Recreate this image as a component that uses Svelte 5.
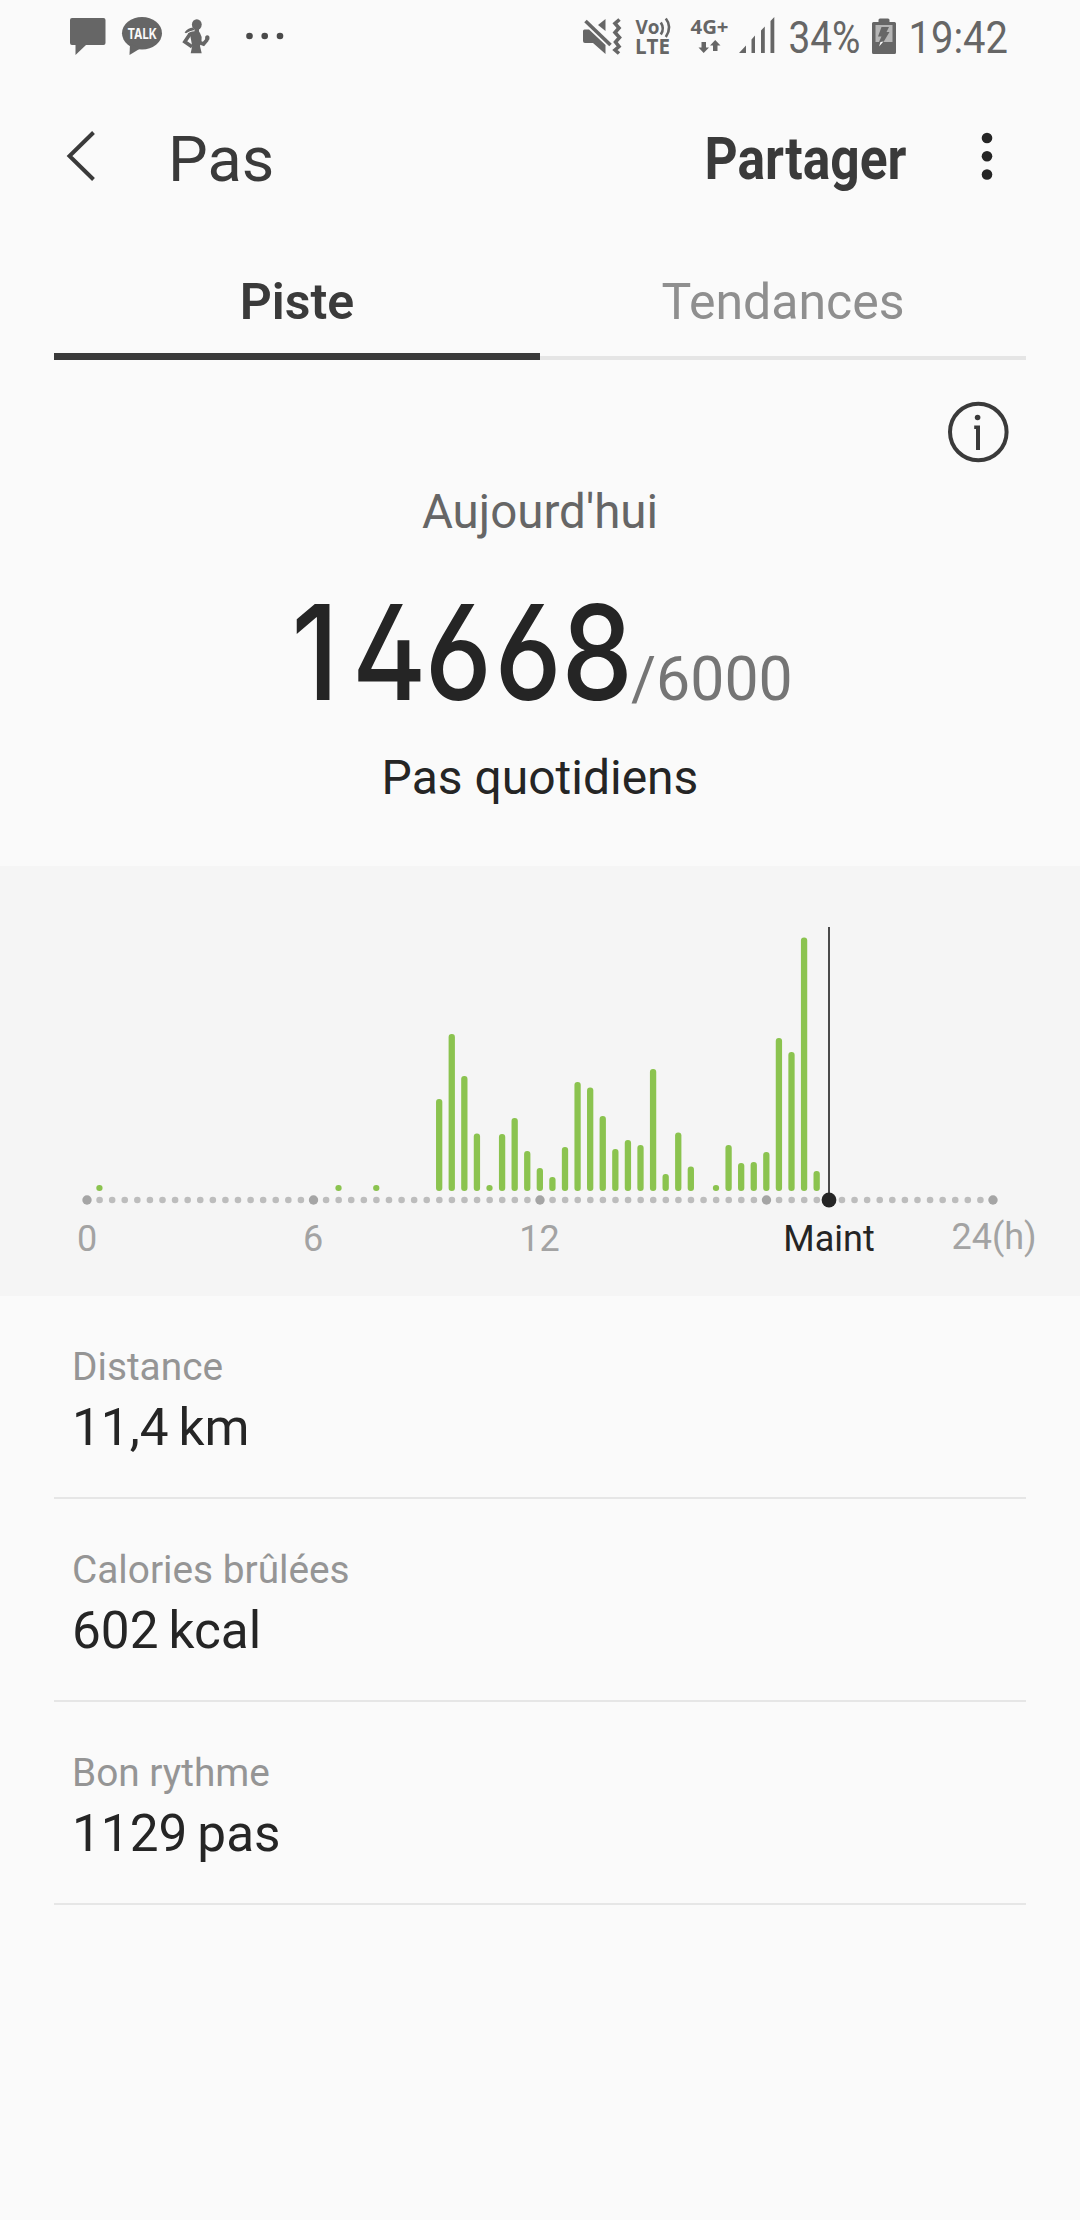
<script lang="ts">
  // Twenty-minute slots of the day, 0 to 72; each value is a bar height in px.
  const bars: [number, number][] = [
    [1, 6], [20, 6], [23, 6],
    [28, 92], [29, 157], [30, 115], [31, 57.5], [32, 6], [33, 57], [34, 73],
    [35, 40], [36, 23], [37, 14], [38, 44], [39, 109], [40, 103.5], [41, 75],
    [42, 42], [43, 51], [44, 46], [45, 122], [46, 17], [47, 58.5], [48, 24.5],
    [50, 6], [51, 46], [52, 28], [53, 29], [54, 39], [55, 153], [56, 139],
    [57, 253.5], [58, 20],
  ];
  const slots = Array.from({ length: 73 }, (_, i) => i);
  const now = 59;
  const slotX = (i: number) => 87 + i * 12.583;

  const stats = [
    { label: 'Distance', value: '11,4', unit: 'km' },
    { label: 'Calories brûlées', value: '602', unit: 'kcal' },
    { label: 'Bon rythme', value: '1129', unit: 'pas' },
  ];
</script>

<div class="screen">
  <div class="status">
    <svg class="lead" width="48" height="75" viewBox="66 0 48 75">
      <path d="M72 18H103.500Q105.500 18 105.500 20V43Q105.500 45 103.500 45H86L75.500 55V45H72Q70 45 70 43V20Q70 18 72 18Z" />
    </svg>
    <svg width="60" height="75" viewBox="114 0 60 75">
      <ellipse cx="142" cy="33.300" rx="20" ry="16.300" />
      <path d="M130 44L129.500 55L141 48Z" />
      <text class="talk" x="127.500" y="38.800" textLength="29.500" lengthAdjust="spacingAndGlyphs">TALK</text>
    </svg>
    <svg width="60" height="75" viewBox="174 0 60 75">
      <ellipse cx="196.800" cy="24.600" rx="4.900" ry="5.400" />
      <path d="M193 27.500Q187.500 28 184.600 32.500L186 33.300Q189.500 30.800 194.500 30Z" />
      <path d="M194.500 28H199V31.500L200 33Q202.500 37 201.500 41L200 46L201.700 53.300H190.700L192.200 46L190.300 36L188 33.500Q189.500 31.800 194.500 31.200Z" />
      <path class="line w3" d="M190 34L184.800 41.700L192 46.700" />
      <path class="line w3" d="M199.500 42.500L203.500 44L207.300 39.500" />
      <ellipse cx="207.300" cy="38" rx="2.200" ry="2.700" />
    </svg>
    <svg width="60" height="75" viewBox="234 0 60 75">
      <g class="dark">
        <circle cx="249.500" cy="36" r="3.300" />
        <circle cx="264.700" cy="36" r="3.300" />
        <circle cx="280" cy="36" r="3.300" />
      </g>
    </svg>
    <svg class="right" width="48" height="75" viewBox="580 0 48 75">
      <path d="M583 31Q583 29.500 584.500 29.500H589L605.500 45V54L593 43H585Q583 43 583 41Z" />
      <path d="M598 25L605.500 19V31Z" />
      <path class="line w3" d="M585.500 21L610.500 45" />
      <path class="line w3" d="M619.500 19.500L615 23.500L619 28L615 32.500L619.500 37.500L615.500 42L619 46.500L615 50L619 53.500" />
    </svg>
    <svg width="56" height="75" viewBox="628 0 56 75">
      <text class="net" x="635.500" y="34" font-size="20" textLength="24" lengthAdjust="spacingAndGlyphs">Vo</text>
      <path class="line w2" d="M660.800 22.500Q664.800 28.500 660.800 34.500M665.800 18.500Q672.500 27 665.800 37" />
      <text class="net" x="635" y="53.500" font-size="20.500" textLength="35" lengthAdjust="spacingAndGlyphs">LTE</text>
    </svg>
    <svg width="50" height="75" viewBox="684 0 50 75">
      <text class="net" x="690.500" y="34" font-size="19.500" textLength="38" lengthAdjust="spacingAndGlyphs">4G+</text>
      <path d="M701.500 42H706V47.500H709L703.700 53L698.500 47.500H701.500ZM713 51V45.500H710L715.200 40L720.500 45.500H717.500V51Z" />
    </svg>
    <svg width="48" height="75" viewBox="734 0 48 75">
      <path d="M739 53L746 45.500V53ZM751.500 53V39.500L755 35.500V53ZM761 53V30.500L764.800 26.500V53ZM770.500 53V21L774.300 17V53Z" />
    </svg>
    <svg width="84" height="75" viewBox="782 0 84 75">
      <text class="clock" x="788.500" y="53" textLength="72" lengthAdjust="spacingAndGlyphs">34%</text>
    </svg>
    <svg width="40" height="75" viewBox="866 0 40 75">
      <path d="M878.500 22V20Q878.500 18.500 880 18.500H888Q889.500 18.500 889.500 20V22H894.500Q896 22 896 23.500V52.500Q896 54 894.500 54H873.500Q872 54 872 52.500V23.500Q872 22 873.500 22Z" />
      <path class="cell" d="M875.500 25H892.500V42H875.500Z" />
      <path d="M881.500 27H889L886.500 32H889.500L883.500 42H879L881.500 36.500H878Z" />
      <path class="spark" d="M883.500 41.500L879 46.500L880.500 42Z" />
    </svg>
    <svg width="106" height="75" viewBox="906 0 106 75">
      <text class="clock" x="908.500" y="53" textLength="99.500" lengthAdjust="spacingAndGlyphs">19:42</text>
    </svg>
  </div>

  <header>
    <svg class="back" width="32" height="52" viewBox="66 130 32 52">
      <path class="line w4" d="M93.500 132.500L69.500 156L93.500 179.500" />
    </svg>
    <h1>Pas</h1>
    <svg class="share" width="206" height="75" viewBox="702 120 206 75">
      <text x="704.500" y="179" textLength="202" lengthAdjust="spacingAndGlyphs">Partager</text>
    </svg>
    <svg class="more" width="12" height="50" viewBox="981 132 12 50">
      <circle cx="987" cy="138" r="5.300" />
      <circle cx="987" cy="156.300" r="5.300" />
      <circle cx="987" cy="174.500" r="5.300" />
    </svg>
  </header>

  <nav>
    <div class="tab active">Piste</div>
    <div class="tab">Tendances</div>
  </nav>

  <section class="today">
    <svg class="info" width="64" height="64" viewBox="946 400 64 64">
      <circle class="ring" cx="978.300" cy="432" r="28.300" />
      <circle cx="977.600" cy="417.500" r="2.800" />
      <path d="M974.200 425.500H980V450H976V429H974.200Z" />
    </svg>
    <div class="day">Aujourd'hui</div>
    <svg class="summary" width="1080" height="140" viewBox="0 580 1080 140">
      <text class="count" x="366.500 452.500 533 614 694.500" y="700" transform="scale(0.86 1)">14668</text>
      <text class="goal" x="631" y="700">/6000</text>
    </svg>
    <div class="day daily">Pas quotidiens</div>
  </section>

  <section class="chart">
    <svg width="1080" height="430" viewBox="0 866 1080 430">
      {#each slots as i}
        <circle class={i % 18 === 0 ? 'hour' : 'slot'} cx={slotX(i)} cy="1200" r={i % 18 === 0 ? 4.7 : 3.3} />
      {/each}
      {#each bars as [i, h]}
        <rect class="bar" x={slotX(i) - 3.3} y={1191 - h} width="6.300" height={h} rx="3" />
      {/each}
      <rect class="now-line" x="828" y="927" width="2" height="270" />
      <circle class="now-dot" cx={slotX(now) - 0.4} cy="1200" r="7.400" />
      <g class="labels">
        <text x="87" y="1251">0</text>
        <text x="313" y="1251">6</text>
        <text x="539.500" y="1251">12</text>
        <text class="current" x="829" y="1251">Maint</text>
        <text x="994" y="1249">24(h)</text>
      </g>
    </svg>
  </section>

  <section class="stats">
    {#each stats as s}
      <div class="stat">
        <div class="label">{s.label}</div>
        <div class="value"><span>{s.value}</span><span>{s.unit}</span></div>
      </div>
    {/each}
  </section>
</div>

<style>
  :global(body) { background: #fafafa; }
  .screen { width: 1080px; height: 2220px; overflow: hidden; background: #fafafa; font-family: Roboto, sans-serif; color: #252525; }
  svg { display: block; flex: none; overflow: visible; }

  .status { display: flex; height: 75px; }
  .status svg { fill: #666; }
  .lead { margin-left: 66px; }
  .right { margin-left: 286px; }
  .status .dark { fill: #4a4a4a; }
  .status .talk { fill: #fafafa; }
  .status .cell { fill: #b5b5b5; }
  .status .spark { fill: #fff; }
  .talk { font: 700 15px Inter, sans-serif; }
  .net { font-family: "Open Sans", sans-serif; font-weight: 700; }
  .clock { font: 400 44.500px Roboto, sans-serif; }
  .line { fill: none; stroke: #666; }
  .w2 { stroke-width: 2.600; }
  .w3 { stroke-width: 3.600; }
  .w4 { stroke: #3a3a3a; stroke-width: 4; }

  header { display: flex; align-items: center; height: 165px; padding: 0 87px 0 66px; box-sizing: border-box; }
  .back { margin-top: -3px; }
  h1 { margin: 5px auto 0 70px; font-size: 63px; font-weight: 400; color: #3a3a3a; line-height: 74px; }
  .share { margin-right: 73px; fill: #3a3a3a; }
  .share text { font: 700 58.500px Roboto, sans-serif; }
  .more { margin-top: -1px; fill: #252525; }

  nav { display: flex; margin: 0 54px; height: 120px; box-shadow: inset 0 -4px #e5e5e5; }
  .tab { flex: 1; text-align: center; font-size: 50px; line-height: 124px; height: 120px; color: #8f8f8f; }
  .active { color: #3a3a3a; font-weight: 600; box-shadow: inset 0 -7px #3a3a3a; }

  .today { height: 506px; padding-top: 40px; box-sizing: border-box; }
  .info { margin-left: 946px; fill: #3a3a3a; }
  .ring { fill: none; stroke: #3a3a3a; stroke-width: 4; }
  .day { margin-top: 18px; height: 60px; line-height: 60px; font-size: 47.500px; text-align: center; color: #666; }
  .summary { margin-top: 38px; }
  .daily { margin-top: 28px; font-size: 48px; color: #252525; }
  .count { font: 550 132px Inter, sans-serif; font-feature-settings: "ss01", "cv03"; fill: #252525; text-anchor: middle; }
  .goal { font-size: 60.800px; fill: #757575; }

  .chart { height: 430px; background: #f5f5f5; }
  .slot { fill: #bdbdbd; }
  .hour { fill: #a5a5a5; }
  .bar { fill: #8bc34f; }
  .now-line { fill: #4a4a4a; }
  .now-dot { fill: #252525; }
  .labels { font-size: 36px; fill: #a3a3a3; text-anchor: middle; }
  .labels .current { fill: #252525; }

  .stats { padding: 0 54px; }
  .stat { height: 203px; padding: 48px 18px 0; box-sizing: border-box; border-bottom: 2px solid #e6e6e6; }
  .label { font-size: 38.800px; line-height: 46px; color: #959595; }
  .value { display: flex; gap: 10px; font-size: 51.300px; line-height: 60px; margin-top: 8px; }
</style>
